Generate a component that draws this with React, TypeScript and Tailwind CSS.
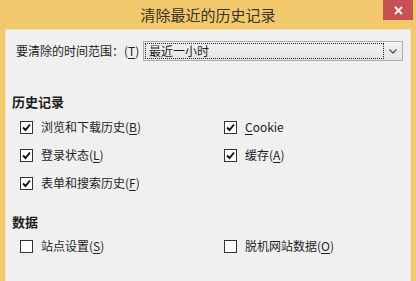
import React from "react";

const font = { fontFamily: '"Noto Sans CJK SC", "Noto Sans", sans-serif' };

function Check() {
  return (
    <svg width="9" height="9" viewBox="0 0 9 9">
      <path d="M1 4.5 L3.5 7 L8 1.5" fill="none" stroke="#111" strokeWidth="1.9" />
    </svg>
  );
}

function Box({ checked }: { checked: boolean }) {
  return (
    <div className="w-[13px] h-[13px] border border-[#333] bg-white flex items-center justify-center shrink-0">
      {checked && <Check />}
    </div>
  );
}

function Item({ checked, label, acc, post }: { checked: boolean; label: string; acc: string; post?: string }) {
  return (
    <div className="h-[28px] flex items-center gap-[8px]">
      <Box checked={checked} />
      <span className="text-[12px] text-[#1e1e1e] leading-none">
        {label}
        {post === undefined ? (
          <>
            (<span className="underline underline-offset-2">{acc}</span>)
          </>
        ) : (
          <>
            <span className="underline underline-offset-2">{acc}</span>
            {post}
          </>
        )}
      </span>
    </div>
  );
}

export default function App() {
  return (
    <div className="w-[416px] h-[281px] bg-[#f1c86c] flex flex-col overflow-hidden" style={font}>
      <div className="h-[29px] relative flex items-center justify-center shrink-0">
        <span className="text-[15px] text-[#383326] leading-none">清除最近的历史记录</span>
        <div className="absolute right-[3px] top-0 w-[30px] h-[20px] bg-[#c75050] flex items-center justify-center">
          <svg width="9" height="9" viewBox="0 0 9 9">
            <path d="M1 1 L8 8 M8 1 L1 8" stroke="#fff" strokeWidth="1.8" />
          </svg>
        </div>
      </div>
      <div className="flex-1 ml-[5px] mr-[5px] bg-[#f0f0f0] border-t border-l border-r border-[#f5e3b6] flex flex-col">
        <div className="flex items-center pl-[10px] pt-[11px] h-[31px]">
          <span className="text-[12px] text-[#1e1e1e] leading-none w-[127px]">
            要清除的时间范围：(<span className="underline underline-offset-2">T</span>)
          </span>
          <div className="w-[260px] h-[20px] border border-[#acacac] bg-gradient-to-b from-[#f2f2f2] to-[#e5e5e5] flex items-center p-[1px]">
            <div className="flex-1 h-full border border-dotted border-[#222] flex items-center pl-[3px]">
              <span className="text-[12px] text-[#1e1e1e] leading-none">最近一小时</span>
            </div>
            <div className="w-[17px] h-full flex items-center justify-center">
              <svg width="8" height="5" viewBox="0 0 8 5">
                <path d="M0.5 0.5 L4 4 L7.5 0.5" fill="none" stroke="#555" strokeWidth="1.4" />
              </svg>
            </div>
          </div>
        </div>
        <div className="mt-[30px] pl-[6px] h-[20px] flex items-center">
          <span className="text-[13px] font-bold text-[#1e1e1e] leading-none">历史记录</span>
        </div>
        <div className="mt-[2px] pl-[14px] grid grid-cols-[204px_1fr]">
          <Item checked label="浏览和下载历史" acc="B" />
          <Item checked label="" acc="C" post="ookie" />
          <Item checked label="登录状态" acc="L" />
          <Item checked label="缓存" acc="A" />
          <Item checked label="表单和搜索历史" acc="F" />
        </div>
        <div className="mt-[14px] pl-[6px] h-[20px] flex items-center">
          <span className="text-[13px] font-bold text-[#1e1e1e] leading-none">数据</span>
        </div>
        <div className="mt-[1px] pl-[14px] grid grid-cols-[204px_1fr]">
          <Item checked={false} label="站点设置" acc="S" />
          <Item checked={false} label="脱机网站数据" acc="O" />
        </div>
      </div>
    </div>
  );
}
